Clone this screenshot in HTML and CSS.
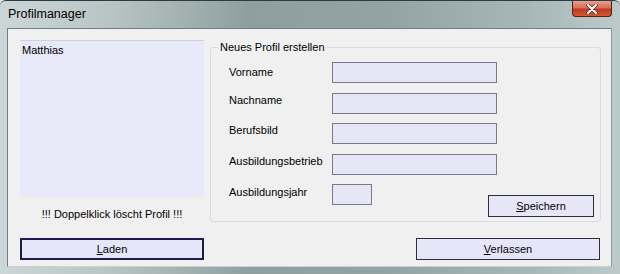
FILE: index.html
```html
<!DOCTYPE html>
<html lang="de">
<head>
    <meta charset="UTF-8">
    <title>Profilmanager</title>
    <link rel="stylesheet" href="styles.css">
</head>
<body>

    <div class="window">
        <!-- Title bar -->
        <div class="titlebar">
            <span class="title">Profilmanager</span>
            <div class="close-btn">
                <svg width="14" height="10" viewBox="0 0 14 10">
                    <path d="M3 1 L11 9 M11 1 L3 9" stroke="#6a2a20" stroke-width="3.6" stroke-linecap="round"/>
                    <path d="M3 1 L11 9 M11 1 L3 9" stroke="#ffffff" stroke-width="2" stroke-linecap="round"/>
                </svg>
            </div>
        </div>

        <!-- Client area -->
        <div class="client">
            <div class="profiles">
                <div class="listbox">
                    <div class="list-item">Matthias</div>
                </div>
                <p class="note">!!! Doppelklick löscht Profil !!!</p>
            </div>

            <fieldset class="group">
                <legend>Neues Profil erstellen</legend>
                <div class="form-row first-row">
                    <label>Vorname</label>
                    <input type="text" class="field">
                </div>
                <div class="form-row">
                    <label>Nachname</label>
                    <input type="text" class="field">
                </div>
                <div class="form-row">
                    <label>Berufsbild</label>
                    <input type="text" class="field">
                </div>
                <div class="form-row">
                    <label>Ausbildungsbetrieb</label>
                    <input type="text" class="field">
                </div>
                <div class="form-row last-row">
                    <label>Ausbildungsjahr</label>
                    <input type="text" class="field short">
                    <button class="btn save-btn"><u>S</u>peichern</button>
                </div>
            </fieldset>

            <button class="btn wide-btn default-btn"><u>L</u>aden</button>
            <button class="btn wide-btn exit-btn"><u>V</u>erlassen</button>
        </div>
    </div>

</body>
</html>
```

FILE: styles.css
```css
/* Global */
body {
    margin: 0;
    padding: 0;
    width: 620px;
    height: 274px;
    overflow: hidden;
    background-color: #dde3e4;
    font-family: "Liberation Sans", Arial, sans-serif;
    font-size: 11px;
    color: #000;
}

/* Window frame */
.window {
    width: 620px;
    height: 274px;
    box-sizing: border-box;
    border-top: 1px solid #2c3a42;
    border-radius: 6px 6px 0 0;
    background: linear-gradient(90deg, #cdd6d6 0%, #b8c4c4 18%, #8f9f9f 40%, #93a3a3 62%, #a7b6b6 85%, #bccaca 100%);
    display: flex;
    flex-direction: column;
}

.titlebar {
    height: 27px;
    display: flex;
    justify-content: space-between;
    align-items: flex-start;
    padding-left: 8px;
}

.title {
    font-size: 12.5px;
    line-height: 26px;
    color: #000;
}

.close-btn {
    width: 40px;
    height: 16px;
    margin-right: 8px;
    box-sizing: border-box;
    border: 1px solid #5a2018;
    border-top: none;
    border-radius: 0 0 4px 4px;
    background: linear-gradient(180deg, #e6a08c 0%, #d67058 45%, #c0381e 55%, #d05a36 100%);
    display: flex;
    align-items: center;
    justify-content: center;
}

/* Client area */
.client {
    margin-left: 7px;
    width: 605px;
    height: 239px;
    box-sizing: border-box;
    border: 1px solid #6f7f88;
    border-bottom-color: #c8d2d6;
    border-right-color: #8a9aa2;
    background-color: #f0f0f0;
    padding: 11px 10px 0 12px;
    display: grid;
    grid-template-columns: 184px 1fr;
    grid-template-rows: 192px 22px;
    column-gap: 6px;
    row-gap: 6px;
}

/* Profile list */
.listbox {
    height: 157px;
    box-sizing: border-box;
    background-color: #e7e8f8;
    border-top: 1px solid #cfd0da;
    padding: 3px 2px;
}

.list-item {
    line-height: 13px;
}

.note {
    margin: 11px 0 0;
    text-align: center;
    line-height: 13px;
}

/* Group box */
.group {
    margin: 1px 0 0;
    padding: 8px 6px 4px 18px;
    border: 1px solid #d5dbe0;
    border-radius: 3px;
    min-width: 0;
    align-self: start;
}

.group legend {
    padding: 0 2px;
    margin-left: -11px;
    line-height: 13px;
}

.form-row {
    display: flex;
    align-items: flex-start;
    margin-bottom: 9.5px;
}

.form-row label {
    width: 103px;
    line-height: 13px;
    padding-top: 1px;
}

.first-row label {
    padding-top: 4px;
}

.last-row {
    margin-bottom: 0;
}

.last-row label {
    padding-top: 2px;
}

.field {
    width: 165px;
    height: 21px;
    box-sizing: border-box;
    margin: 0;
    border: 1px solid #7a7a86;
    background-color: #e6e6f6;
    font: inherit;
}

.field.short {
    width: 40px;
}

/* Buttons */
.btn {
    height: 22px;
    box-sizing: border-box;
    margin: 0;
    padding: 0;
    border: 1px solid #2c2c3c;
    background-color: #e6e6f8;
    font: inherit;
    color: #000;
}

.save-btn {
    width: 106px;
    margin-left: auto;
    margin-top: 11px;
}

.wide-btn {
    width: 184px;
}

.default-btn {
    border: 2px solid #1c1c50;
}

.exit-btn {
    justify-self: end;
    margin-right: 1px;
}
```
